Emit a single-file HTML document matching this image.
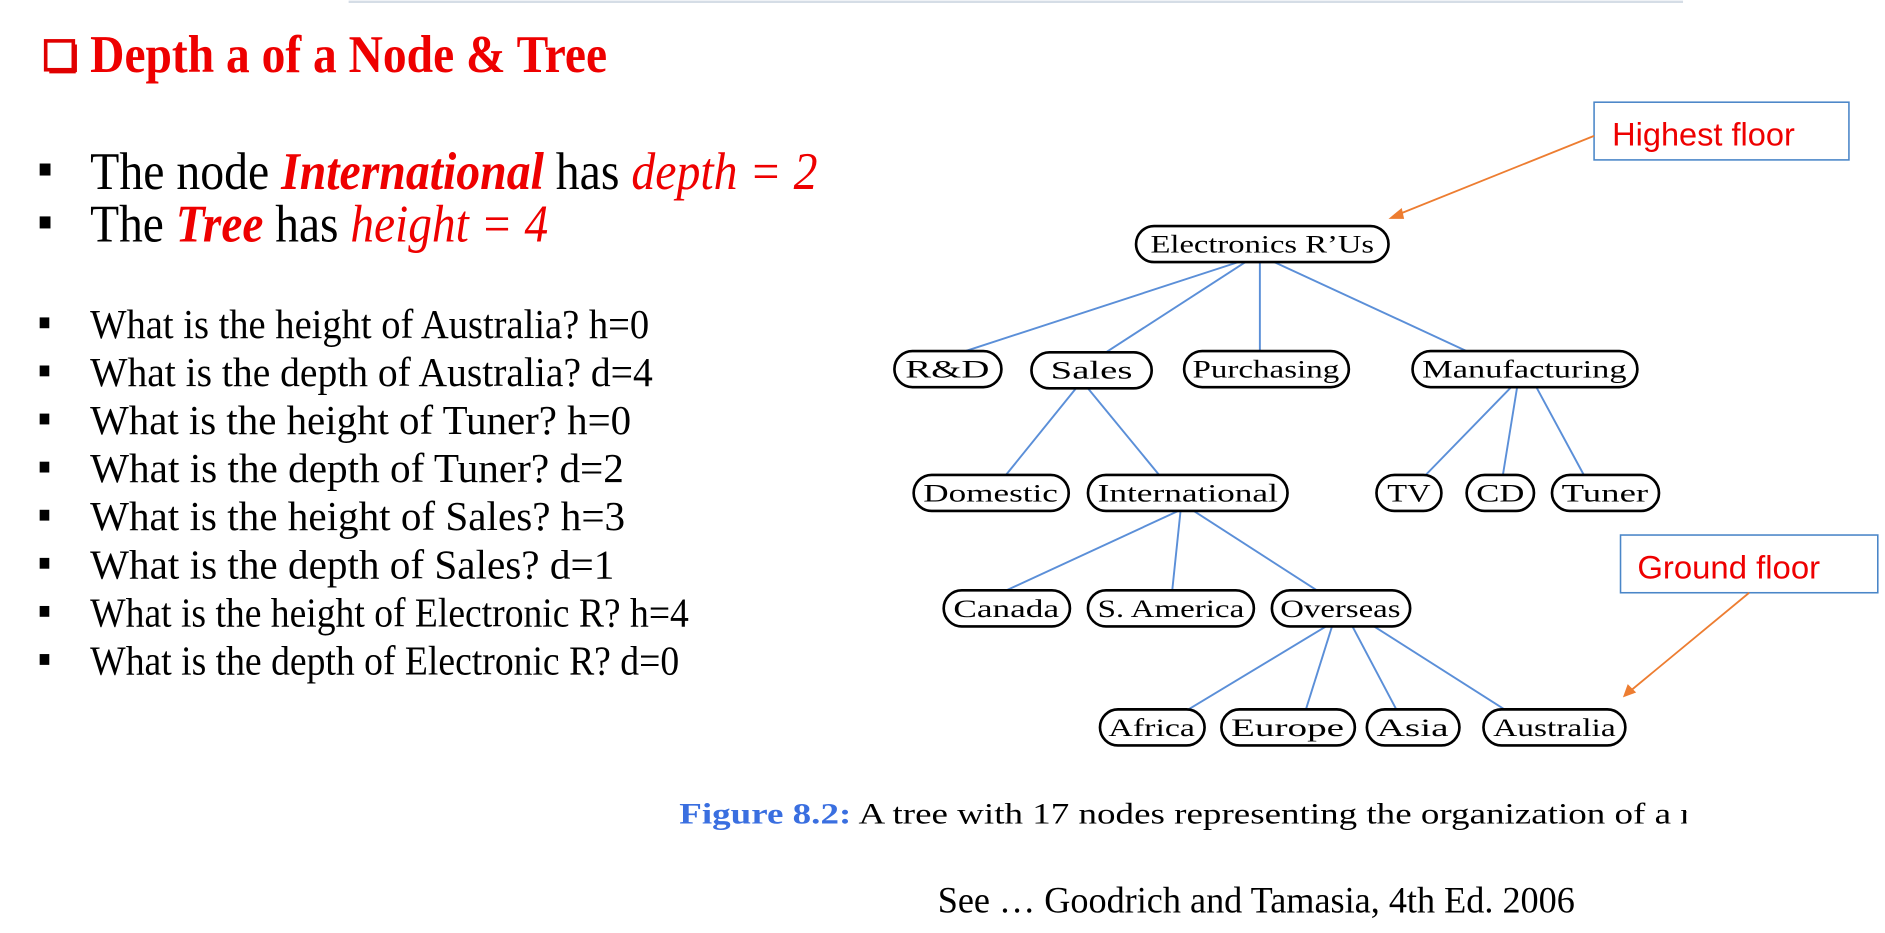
<!DOCTYPE html>
<html><head><meta charset="utf-8"><style>
html,body{margin:0;padding:0;background:#fff;width:1885px;height:933px;overflow:hidden}
svg{display:block}
text{font-family:"Liberation Serif",serif}
</style></head><body>
<svg width="1885" height="933" viewBox="0 0 1568 776" preserveAspectRatio="none" xmlns="http://www.w3.org/2000/svg">
<line x1="290" y1="1.5" x2="1400" y2="1.5" stroke="#d5dde6" stroke-width="2"/>
<rect x="38" y="34" width="23" height="24" fill="none" stroke="#e00000" stroke-width="3"/>
<line x1="41" y1="60" x2="63" y2="60" stroke="#e00000" stroke-width="2"/>
<line x1="63" y1="37" x2="63" y2="60" stroke="#e00000" stroke-width="2"/>
<text x="75" y="60" font-size="44" font-weight="bold" fill="#ee0000" textLength="430" lengthAdjust="spacingAndGlyphs">Depth a of a Node &amp; Tree</text>
<rect x="33" y="136" width="9" height="10" fill="#000"/>
<text x="75" y="157" font-size="44" textLength="605" lengthAdjust="spacingAndGlyphs">The node <tspan fill="#ee0000" font-weight="bold" font-style="italic">International</tspan> has <tspan fill="#ee0000" font-style="italic">depth = 2</tspan></text>
<rect x="33" y="180" width="9" height="10" fill="#000"/>
<text x="75" y="201" font-size="44" textLength="381" lengthAdjust="spacingAndGlyphs">The <tspan fill="#ee0000" font-weight="bold" font-style="italic">Tree</tspan> has <tspan fill="#ee0000" font-style="italic">height = 4</tspan></text>
<g font-size="34">
<rect x="33" y="264" width="8" height="9" fill="#000"/>
<text x="75" y="281" textLength="465" lengthAdjust="spacingAndGlyphs">What is the height of Australia? h=0</text>
<rect x="33" y="304" width="8" height="9" fill="#000"/>
<text x="75" y="321" textLength="468" lengthAdjust="spacingAndGlyphs">What is the depth of Australia? d=4</text>
<rect x="33" y="344" width="8" height="9" fill="#000"/>
<text x="75" y="361" textLength="450" lengthAdjust="spacingAndGlyphs">What is the height of Tuner? h=0</text>
<rect x="33" y="384" width="8" height="9" fill="#000"/>
<text x="75" y="401" textLength="444" lengthAdjust="spacingAndGlyphs">What is the depth of Tuner? d=2</text>
<rect x="33" y="424" width="8" height="9" fill="#000"/>
<text x="75" y="441" textLength="445" lengthAdjust="spacingAndGlyphs">What is the height of Sales? h=3</text>
<rect x="33" y="464" width="8" height="9" fill="#000"/>
<text x="75" y="481" textLength="436" lengthAdjust="spacingAndGlyphs">What is the depth of Sales? d=1</text>
<rect x="33" y="504" width="8" height="9" fill="#000"/>
<text x="75" y="521" textLength="498" lengthAdjust="spacingAndGlyphs">What is the height of Electronic R? h=4</text>
<rect x="33" y="544" width="8" height="9" fill="#000"/>
<text x="75" y="561" textLength="490" lengthAdjust="spacingAndGlyphs">What is the depth of Electronic R? d=0</text>
</g>
<g stroke="#5b8fd8" stroke-width="1.6" fill="none">
<line x1="1030" y1="218" x2="800" y2="293"/>
<line x1="1036" y1="218" x2="920" y2="293"/>
<line x1="1048" y1="218" x2="1048" y2="292"/>
<line x1="1060" y1="218" x2="1220" y2="292"/>
<line x1="895" y1="323" x2="836" y2="396"/>
<line x1="905" y1="323" x2="965" y2="396"/>
<line x1="1257" y1="322" x2="1185" y2="396"/>
<line x1="1262" y1="322" x2="1250" y2="396"/>
<line x1="1278" y1="322" x2="1318" y2="396"/>
<line x1="980" y1="425" x2="835" y2="492"/>
<line x1="982" y1="425" x2="975" y2="492"/>
<line x1="993" y1="425" x2="1097" y2="492"/>
<line x1="1103" y1="521" x2="987" y2="591"/>
<line x1="1108" y1="521" x2="1086" y2="591"/>
<line x1="1125" y1="521" x2="1162" y2="591"/>
<line x1="1143" y1="521" x2="1253" y2="591"/>
</g>
<g fill="#fff" stroke="#000" stroke-width="2.2">
<rect x="945" y="188" width="210" height="30" rx="15"/>
<rect x="744" y="292" width="89" height="30" rx="15"/>
<rect x="858" y="293" width="100" height="30" rx="15"/>
<rect x="985" y="292" width="137" height="30" rx="15"/>
<rect x="1175" y="292" width="187" height="30" rx="15"/>
<rect x="760" y="395" width="129" height="30" rx="15"/>
<rect x="905" y="395" width="166" height="30" rx="15"/>
<rect x="1145" y="395" width="54" height="30" rx="15"/>
<rect x="1220" y="395" width="56" height="30" rx="15"/>
<rect x="1291" y="395" width="89" height="30" rx="15"/>
<rect x="785" y="491" width="105" height="30" rx="15"/>
<rect x="905" y="491" width="138" height="30" rx="15"/>
<rect x="1058" y="491" width="115" height="30" rx="15"/>
<rect x="915" y="590" width="87" height="30" rx="15"/>
<rect x="1016" y="590" width="111" height="30" rx="15"/>
<rect x="1137" y="590" width="77" height="30" rx="15"/>
<rect x="1234" y="590" width="118" height="30" rx="15"/>
</g>
<g font-size="21" text-anchor="middle">
<text x="1050" y="210" textLength="186" lengthAdjust="spacingAndGlyphs">Electronics R’Us</text>
<text x="788" y="314" textLength="70" lengthAdjust="spacingAndGlyphs">R&amp;D</text>
<text x="908" y="315" textLength="68" lengthAdjust="spacingAndGlyphs">Sales</text>
<text x="1053" y="314" textLength="122" lengthAdjust="spacingAndGlyphs">Purchasing</text>
<text x="1268" y="314" textLength="170" lengthAdjust="spacingAndGlyphs">Manufacturing</text>
<text x="824" y="417" textLength="112" lengthAdjust="spacingAndGlyphs">Domestic</text>
<text x="988" y="417" textLength="150" lengthAdjust="spacingAndGlyphs">International</text>
<text x="1172" y="417" textLength="36" lengthAdjust="spacingAndGlyphs">TV</text>
<text x="1248" y="417" textLength="40" lengthAdjust="spacingAndGlyphs">CD</text>
<text x="1335" y="417" textLength="72" lengthAdjust="spacingAndGlyphs">Tuner</text>
<text x="837" y="513" textLength="88" lengthAdjust="spacingAndGlyphs">Canada</text>
<text x="974" y="513" textLength="122" lengthAdjust="spacingAndGlyphs">S. America</text>
<text x="1115" y="513" textLength="100" lengthAdjust="spacingAndGlyphs">Overseas</text>
<text x="958" y="612" textLength="72" lengthAdjust="spacingAndGlyphs">Africa</text>
<text x="1071" y="612" textLength="94" lengthAdjust="spacingAndGlyphs">Europe</text>
<text x="1175" y="612" textLength="60" lengthAdjust="spacingAndGlyphs">Asia</text>
<text x="1293" y="612" textLength="102" lengthAdjust="spacingAndGlyphs">Australia</text>
</g>
<rect x="1326" y="85" width="212" height="48" fill="#fff" stroke="#4a86c8" stroke-width="1.3"/>
<text x="1341" y="121" font-size="27" fill="#ee0000" textLength="152" lengthAdjust="spacingAndGlyphs" style="font-family:'Liberation Sans',sans-serif">Highest floor</text>
<rect x="1348" y="445" width="214" height="48" fill="#fff" stroke="#4a86c8" stroke-width="1.3"/>
<text x="1362" y="481" font-size="27" fill="#ee0000" textLength="152" lengthAdjust="spacingAndGlyphs" style="font-family:'Liberation Sans',sans-serif">Ground floor</text>
<g stroke="#ed7d31" stroke-width="1.5" fill="#ed7d31">
<line x1="1326" y1="113" x2="1164" y2="178"/>
<polygon points="1155,182 1166,173 1168,182" stroke="none"/>
<line x1="1455" y1="493" x2="1357" y2="574"/>
<polygon points="1350,580 1354,569 1361,576" stroke="none"/>
</g>
<text x="565" y="685" font-size="25" textLength="843" lengthAdjust="spacingAndGlyphs"><tspan fill="#3a6fe0" font-weight="bold">Figure 8.2:</tspan> A tree with 17 nodes representing the organization of a r</text>
<rect x="1403" y="660" width="20" height="30" fill="#fff"/>
<text x="780" y="759" font-size="31" textLength="530" lengthAdjust="spacingAndGlyphs">See … Goodrich and Tamasia, 4th Ed. 2006</text>
</svg>
</body></html>
